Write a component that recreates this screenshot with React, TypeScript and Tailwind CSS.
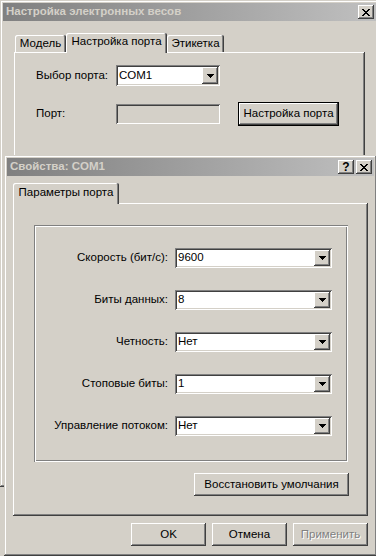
const raised = "shadow-[inset_-1px_-1px_0_#404040,inset_1px_1px_0_#ffffff,inset_-2px_-2px_0_#808080]";
const sunken = "shadow-[inset_1px_1px_0_#808080,inset_-1px_-1px_0_#ffffff,inset_2px_2px_0_#404040,inset_-2px_-2px_0_#d4d0c8]";
const frame = "shadow-[inset_-1px_-1px_0_#404040,inset_1px_1px_0_#d4d0c8,inset_-2px_-2px_0_#808080,inset_2px_2px_0_#ffffff]";
const tabShadow = "shadow-[inset_-1px_0_0_#404040,inset_1px_1px_0_#ffffff,inset_-2px_0_0_#808080]";
const etched = "shadow-[inset_1px_1px_0_#808080,inset_-1px_-1px_0_#ffffff,inset_2px_2px_0_#ffffff,inset_-2px_-2px_0_#808080]";

const xPixels = [[0, 1, 6, 7], [1, 2, 5, 6], [2, 3, 4, 5], [3, 4], [2, 3, 4, 5], [1, 2, 5, 6], [0, 1, 6, 7]];

function CloseGlyph() {
    const d = xPixels.flatMap((row, y) => row.map(x => `M${x} ${y}h1v1h-1z`)).join("");
    return (
        <svg width="8" height="7" viewBox="0 0 8 7">
            <path d={d} fill="#000" />
        </svg>
    );
}

function CapBtn({ children }: { children: React.ReactNode }) {
    return (
        <div className={`w-[16px] h-[14px] bg-[#d4d0c8] ${raised} flex items-center justify-center text-[12px] font-bold leading-none text-black`}>
            {children}
        </div>
    );
}

function Caption({ title, help }: { title: string; help?: boolean }) {
    return (
        <div className="h-[18px] flex items-center justify-between bg-linear-to-r from-[#808080] to-[#c0c0c0] pl-[3px] pr-[2px]">
            <span className="text-[11.5px] font-bold text-[#d4d0c8] leading-none">{title}</span>
            <div className="flex gap-[2px]">
                {help && <CapBtn>?</CapBtn>}
                <CapBtn><CloseGlyph /></CapBtn>
            </div>
        </div>
    );
}

function Arrow() {
    return (
        <div className="flex flex-col items-center">
            <div className="w-[7px] h-px bg-black" />
            <div className="w-[5px] h-px bg-black" />
            <div className="w-[3px] h-px bg-black" />
            <div className="w-px h-px bg-black" />
        </div>
    );
}

function Combo({ value, className }: { value: string; className: string }) {
    return (
        <div className={`${sunken} bg-white p-[2px] flex items-stretch ${className}`}>
            <span className="flex-1 pl-[1px] flex items-center">{value}</span>
            <div className={`w-[16px] ${raised} bg-[#d4d0c8] flex items-center justify-center`}>
                <Arrow />
            </div>
        </div>
    );
}

function Button({ children, className, disabled, isDefault }: { children: React.ReactNode; className: string; disabled?: boolean; isDefault?: boolean }) {
    const label = disabled ? "text-[#808080] [text-shadow:1px_1px_0_#ffffff]" : "text-black";
    if (isDefault) {
        return (
            <div className={`border border-black ${className}`}>
                <div className={`w-full h-full ${raised} bg-[#d4d0c8] flex items-center justify-center ${label}`}>{children}</div>
            </div>
        );
    }
    return <div className={`${raised} bg-[#d4d0c8] flex items-center justify-center ${label} ${className}`}>{children}</div>;
}

function Tab({ selected, className, children }: { selected?: boolean; className: string; children: React.ReactNode }) {
    return (
        <div className={`${tabShadow} bg-[#d4d0c8] rounded-t-[2px] flex items-center justify-center ${selected ? "relative z-10 -mb-px pb-[2px]" : ""} ${className}`}>
            {children}
        </div>
    );
}

const rows: [string, string][] = [
    ["Скорость (бит/с):", "9600"],
    ["Биты данных:", "8"],
    ["Четность:", "Нет"],
    ["Стоповые биты:", "1"],
    ["Управление потоком:", "Нет"],
];

export default function App() {
    return (
        <div className="relative w-[376px] h-[556px] overflow-hidden bg-[#d4d0c8] font-['Liberation_Sans',Arial,sans-serif] text-[11.5px] text-black">
            {/* main window */}
            <div className={`absolute left-0 top-0 w-[379px] h-[487px] bg-[#d4d0c8] p-[3px] ${frame}`}>
                <Caption title="Настройка электронных весов" />
                <div className="ml-[11px] mt-[12px] flex items-end h-[19px]">
                    <Tab className="w-[51px] h-[17px] ml-px">Модель</Tab>
                    <Tab selected className="w-[101px] h-[20px]">Настройка порта</Tab>
                    <Tab className="w-[57px] h-[17px]">Этикетка</Tab>
                </div>
                <div className={`ml-[11px] w-[351px] h-[400px] ${raised} pt-[13px] pl-[22px]`}>
                    <div className="flex items-center">
                        <span className="w-[80px]">Выбор порта:</span>
                        <Combo value="COM1" className="w-[104px] h-[21px]" />
                    </div>
                    <div className="flex items-center mt-[16px]">
                        <span className="w-[80px]">Порт:</span>
                        <div className={`w-[104px] h-[20px] ${sunken}`} />
                        <Button isDefault className="ml-[18px] w-[101px] h-[24px]">Настройка порта</Button>
                    </div>
                </div>
            </div>

            {/* port properties dialog */}
            <div className={`absolute left-[4px] top-[155px] w-[373px] h-[401px] bg-[#d4d0c8] p-[3px] ${frame}`}>
                <Caption title="Свойства: COM1" help />
                <div className="ml-[6px] mt-[7px] flex items-end h-[20px]">
                    <Tab selected className="w-[106px] h-[21px]">Параметры порта</Tab>
                </div>
                <div className={`ml-[6px] w-[355px] h-[313px] ${raised} pt-[22px] pl-[21px]`}>
                    <div className={`w-[314px] h-[237px] ${etched} pt-[23px] flex flex-col gap-[22px]`}>
                        {rows.map(([label, value]) => (
                            <div key={label} className="flex items-center h-[20px]">
                                <span className="w-[134px] text-right">{label}</span>
                                <Combo value={value} className="ml-[7px] w-[157px] h-[20px]" />
                            </div>
                        ))}
                    </div>
                    <div className="flex justify-end mt-[11px] w-[315px]">
                        <Button className="w-[155px] h-[23px]">Восстановить умолчания</Button>
                    </div>
                </div>
                <div className="flex justify-end gap-[6px] mt-[7px] w-[361px]">
                    <Button className="w-[75px] h-[23px]">OK</Button>
                    <Button className="w-[75px] h-[23px]">Отмена</Button>
                    <Button disabled className="w-[75px] h-[23px]">Применить</Button>
                </div>
            </div>
        </div>
    );
}
